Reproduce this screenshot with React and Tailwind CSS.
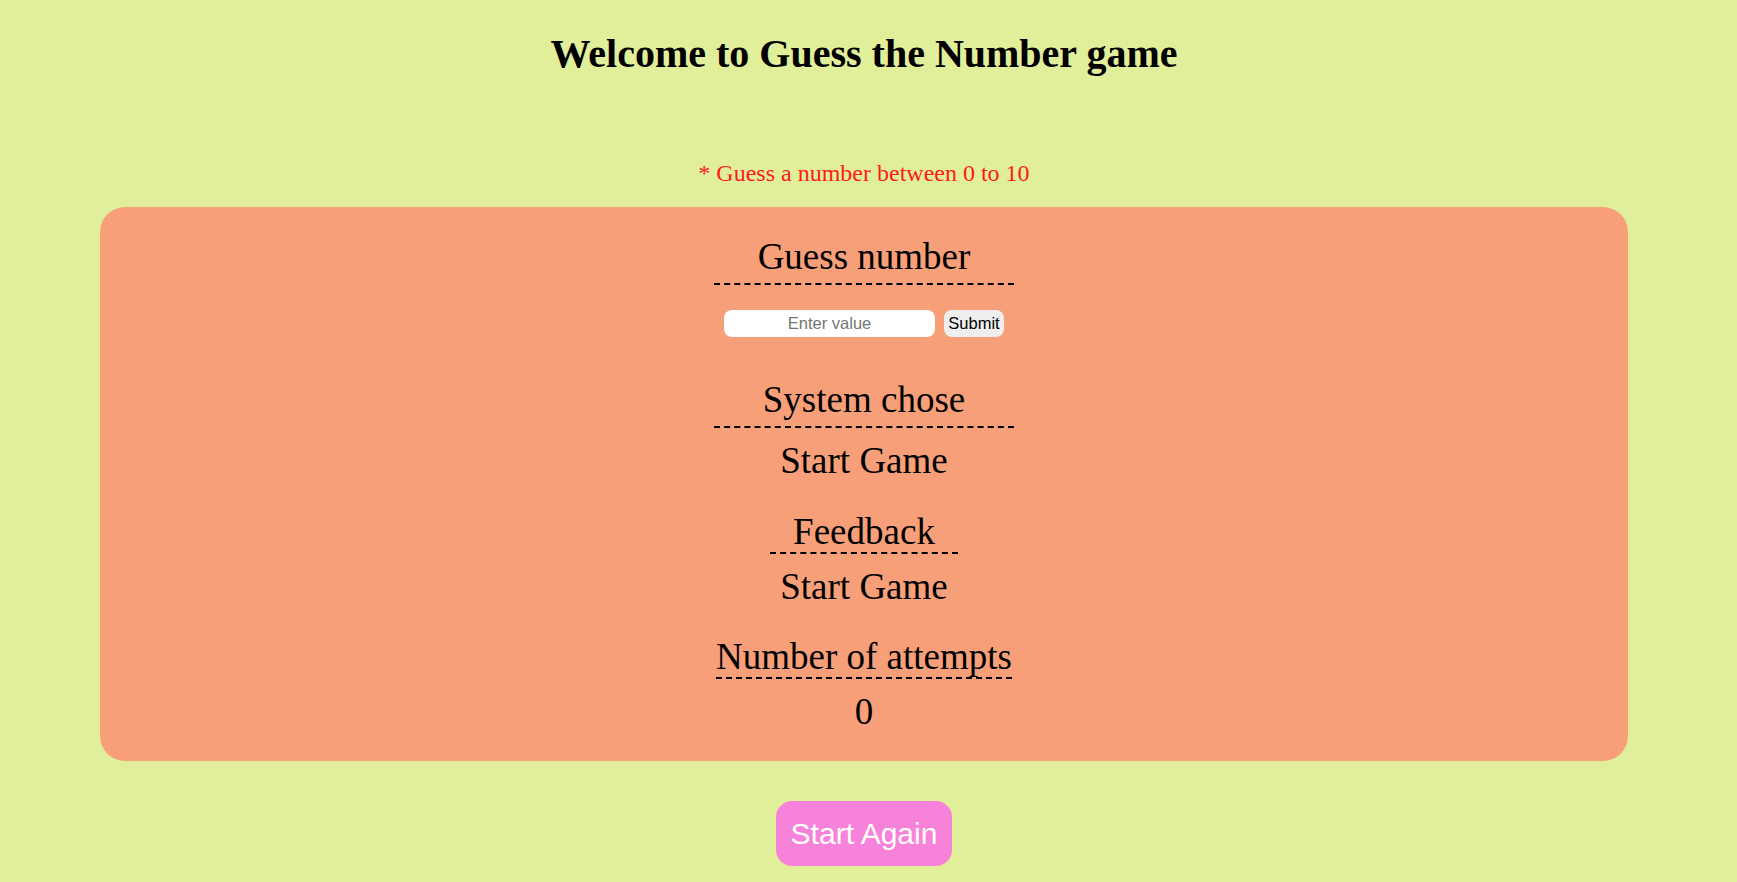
import React, { useState } from 'react';

const serif = { fontFamily: '"Liberation Serif", "Times New Roman", serif' };
const sans = { fontFamily: '"Liberation Sans", Arial, sans-serif' };

// heading with dashed underline; "tight" ones sit right on the line
const Heading = ({ children, width, tight }) => (
  <div
    className={`mx-auto ${width} border-b-2 border-dashed border-black text-[37px] text-center ${
      tight ? 'leading-[40px]' : 'pb-[5px] leading-[42px]'
    }`}
  >
    {children}
  </div>
);

const Value = ({ children }) => (
  <div className="mt-[12px] text-[37px] leading-[42px] text-center">{children}</div>
);

const App = () => {
  const [guess, setGuess] = useState('');

  return (
    <div className="min-h-screen w-full bg-[#e2ef9a]" style={serif}>
      <div className="w-[1728px] pt-[31px] pb-[16px] text-black">
        <h1 className="text-center text-[40px] leading-[46px] font-bold">
          Welcome to Guess the Number game
        </h1>

        <p className="mt-[82px] text-center text-[24px] leading-[28px] text-[#ff1a1a]">
          * Guess a number between 0 to 10
        </p>

        {/* Game card */}
        <div className="mx-[100px] mt-[20px] rounded-[25px] bg-[#f69f79] pt-[29px] pb-[28px]">
          <Heading width="w-[300px]">Guess number</Heading>

          <div className="mt-[25px] flex justify-center gap-[9px]" style={sans}>
            <input
              type="text"
              value={guess}
              onChange={(e) => setGuess(e.target.value)}
              placeholder="Enter value"
              className="h-[27px] w-[211px] rounded-[8px] bg-white text-center text-[16.5px] text-black placeholder:text-[#757575] outline-none"
            />
            <button className="h-[27px] w-[60px] rounded-[8px] bg-[#efefef] text-[16.5px] text-black">
              Submit
            </button>
          </div>

          <div className="mt-[42px]">
            <Heading width="w-[300px]">System chose</Heading>
            <Value>Start Game</Value>
          </div>

          <div className="mt-[30px]">
            <Heading width="w-[188px]" tight>Feedback</Heading>
            <Value>Start Game</Value>
          </div>

          <div className="mt-[29px]">
            <Heading width="w-fit" tight>Number of attempts</Heading>
            <Value>0</Value>
          </div>
        </div>

        <div className="mt-[40px] flex justify-center">
          <button
            className="h-[65px] rounded-[16px] bg-[#f782da] px-[15px] text-[30px] text-white"
            style={sans}
          >
            Start Again
          </button>
        </div>
      </div>
    </div>
  );
};

export default App;
